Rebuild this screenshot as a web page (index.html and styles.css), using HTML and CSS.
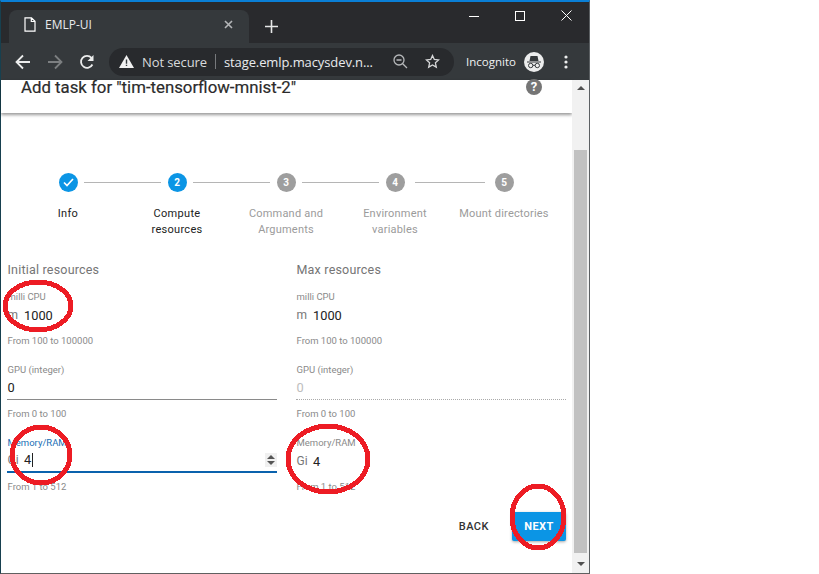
FILE: index.html
```html
<!DOCTYPE html>
<html lang="en">
<head>
<meta charset="utf-8">
<title>EMLP-UI</title>
<link rel="stylesheet" href="styles.css">
</head>
<body>
<div class="window">
  <div class="tabstrip">
    <div class="tab">
      <svg class="tab-file" width="12" height="15" viewBox="0 0 12 15"><path d="M1 .8h6.500L11 4.300v9.900H1zM7.300 1v3.500H11" fill="none" stroke="#fff" stroke-width="1.200"/></svg>
      <span class="tab-title">EMLP-UI</span>
      <svg class="tab-close" width="9" height="9" viewBox="0 0 9 9"><path d="M1 1l7 7M8 1L1 8" stroke="#b4b6b8" stroke-width="1.600"/></svg>
    </div>
    <svg class="newtab" width="13" height="13" viewBox="0 0 13 13"><path d="M6.500 0v13M0 6.500h13" stroke="#e6e7e8" stroke-width="1.600"/></svg>
    <div class="wincontrols">
      <svg width="10" height="10" viewBox="0 0 10 10"><path d="M0 5.500h10" stroke="#fff"/></svg>
      <svg width="10" height="10" viewBox="0 0 10 10"><rect x=".5" y=".5" width="9" height="9" fill="none" stroke="#fff"/></svg>
      <svg width="11" height="11" viewBox="0 0 11 11"><path d="M.5.500l10 10M10.500.500l-10 10" stroke="#fff"/></svg>
    </div>
  </div>
  <div class="toolbar">
    <svg class="navicon" width="16" height="16" viewBox="0 0 16 16"><path d="M15 8H2M8 1.500L1.500 8 8 14.500" fill="none" stroke="#eceded" stroke-width="1.800"/></svg>
    <svg class="navicon" width="16" height="16" viewBox="0 0 16 16"><path d="M1 8h13M8 1.500L14.500 8 8 14.500" fill="none" stroke="#7c7f81" stroke-width="1.800"/></svg>
    <svg class="navicon" width="16" height="16" viewBox="0 0 16 16"><path d="M13.400 10.500A6 6 0 1 1 12.500 3.800" fill="none" stroke="#eceded" stroke-width="1.800"/><path d="M14.500 1v6h-6z" fill="#eceded"/></svg>
    <div class="omnibox">
      <svg width="15" height="13" viewBox="0 0 15 13"><path d="M7.500 0L15 13H0z" fill="#f1f1f1"/><path d="M6.800 4.500h1.400v4.300H6.800zM6.800 9.800h1.400v1.300H6.800z" fill="#35393c"/></svg>
      <span class="secure">Not secure</span>
      <span class="divider"></span>
      <span class="url">stage.emlp.macysdev.n...</span>
      <svg class="zoomicon" width="15" height="15" viewBox="0 0 15 15"><circle cx="6" cy="6" r="5" fill="none" stroke="#b6b8ba" stroke-width="1.300"/><path d="M9.700 9.700L14 14M3.500 6h5" stroke="#b6b8ba" stroke-width="1.300"/></svg>
      <svg class="star" width="15" height="15" viewBox="0 0 15 15"><path d="M7.500 1.500l1.800 4 4.300.4-3.200 2.900.9 4.300-3.800-2.200-3.800 2.200.9-4.300-3.200-2.900 4.300-.4z" fill="none" stroke="#d6d7d8" stroke-width="1.300"/></svg>
    </div>
    <span class="incognito">Incognito</span>
    <svg class="spy" width="20" height="20" viewBox="0 0 20 20"><circle cx="10" cy="10" r="10" fill="#eceded"/><path d="M3 9.500h14v1H3zM5.500 9l1-5h7l1 5z" fill="#35393c"/><circle cx="6.700" cy="13.500" r="2.200" fill="#eceded" stroke="#35393c"/><circle cx="13.300" cy="13.500" r="2.200" fill="#eceded" stroke="#35393c"/><path d="M8.800 13.300h2.400" stroke="#35393c"/></svg>
    <svg class="kebab" width="4" height="14" viewBox="0 0 4 14"><circle cx="2" cy="2" r="1.600" fill="#eceded"/><circle cx="2" cy="7" r="1.600" fill="#eceded"/><circle cx="2" cy="12" r="1.600" fill="#eceded"/></svg>
  </div>
  <div class="viewport">
    <main class="page">
      <header class="dialog-head">
        <h1>Add task for "tim-tensorflow-mnist-2"</h1>
        <span class="help">?</span>
      </header>
      <div class="stepper">
        <div class="step-icons">
          <span class="dot"><svg width="11" height="9" viewBox="0 0 11 9"><path d="M1 4.500l3 3 6-6.500" fill="none" stroke="#fff" stroke-width="1.700"/></svg></span><span class="line"></span>
          <span class="dot">2</span><span class="line"></span>
          <span class="dot off">3</span><span class="line"></span>
          <span class="dot off">4</span><span class="line short"></span>
          <span class="dot off">5</span>
        </div>
        <div class="step-labels">
          <span class="on">Info</span>
          <span class="on">Compute resources</span>
          <span>Command and Arguments</span>
          <span>Environment variables</span>
          <span class="nowrap">Mount directories</span>
        </div>
      </div>
      <div class="form">
        <section class="col">
          <h2>Initial resources</h2>
          <div class="field">
            <label>milli CPU</label>
            <div class="control"><span class="unit">m</span><span class="value">1000</span></div>
            <p>From 100 to 100000</p>
          </div>
          <div class="field">
            <label>GPU (integer)</label>
            <div class="control lined"><span class="value">0</span></div>
            <p>From 0 to 100</p>
          </div>
          <div class="field">
            <label class="focus">Memory/RAM</label>
            <div class="control focused"><span class="unit">Gi</span><span class="value caret">4</span>
              <span class="spinner"><i class="up"></i><i class="down"></i></span>
            </div>
            <p>From 1 to 512</p>
          </div>
        </section>
        <section class="col">
          <h2>Max resources</h2>
          <div class="field">
            <label>milli CPU</label>
            <div class="control"><span class="unit">m</span><span class="value">1000</span></div>
            <p>From 100 to 100000</p>
          </div>
          <div class="field">
            <label>GPU (integer)</label>
            <div class="control dotted"><span class="value muted">0</span></div>
            <p>From 0 to 100</p>
          </div>
          <div class="field">
            <label>Memory/RAM</label>
            <div class="control"><span class="unit">Gi</span><span class="value">4</span></div>
            <p>From 1 to 512</p>
          </div>
        </section>
      </div>
      <div class="actions">
        <button class="back" type="button">BACK</button>
        <button class="next" type="button">NEXT</button>
      </div>
    </main>
    <div class="scrollbar">
      <span class="arrow-up"></span>
      <div class="track"><div class="thumb"></div></div>
      <span class="arrow-down"></span>
    </div>
  </div>
</div>
<svg class="annotations" width="819" height="574" viewBox="0 0 819 574" shape-rendering="crispEdges">
  <ellipse cx="38" cy="306" rx="33" ry="24"/>
  <ellipse cx="41" cy="455" rx="29" ry="28"/>
  <ellipse cx="328" cy="459" rx="40" ry="33"/>
  <ellipse cx="538" cy="517" rx="26" ry="31"/>
</svg>
</body>
</html>
```
FILE: styles.css
```css
* { box-sizing: border-box; }
html, body { margin: 0; height: 574px; background: #fff; overflow: hidden; }
body { font-family: Roboto, "Liberation Sans", sans-serif; position: relative; }
.window {
  width: 590px; height: 574px; display: flex; flex-direction: column;
  border-left: 1px solid #17404f; border-right: 1px solid #5c6063;
  border-top: 2px solid #0a7fd6; border-bottom: 1px solid #606060;
}
.tabstrip { height: 41px; background: #292a2d; display: flex; align-items: flex-end; position: relative; flex: none; }
.tab {
  width: 240px; height: 33px; margin-left: 8px; background: #35393c;
  border-radius: 8px 8px 0 0; display: flex; align-items: center; padding: 0 16px 5px 15px; flex: none;
}
.tab-title { color: #e8eaed; font: 12px "Open Sans", "Liberation Sans", sans-serif; margin-left: 9px; flex: 1; }
.newtab { margin: 0 0 10px 16px; }
.wincontrols { margin-left: auto; align-self: flex-start; display: flex; align-items: center; gap: 36px; padding: 8px 17px 0 0; }
.toolbar { height: 37px; background: #35393c; display: flex; align-items: center; flex: none; color: #e8eaed; }
.navicon { margin-left: 14px; flex: none; margin-right: 1px; }
.navicon + .navicon { margin-left: 15px; }
.omnibox {
  width: 345px; height: 28px; margin-left: 13px; background: #282a2d; border-radius: 14px;
  display: flex; align-items: center; padding: 0 10px 0 10px; flex: none;
}
.secure { font: 13px "Open Sans", "Liberation Sans", sans-serif; margin-left: 8px; color: #d8dadc; letter-spacing: -.1px; }
.divider { width: 1px; height: 15px; background: #77797c; margin: 0 8px 0 8px; }
.url { font: 13px "Open Sans", "Liberation Sans", sans-serif; color: #e8eaed; white-space: nowrap; width: 156px; letter-spacing: -.1px; }
.zoomicon { margin-left: 13px; flex: none; }
.star { margin-left: 17px; flex: none; }
.incognito { font: 11.500px "Open Sans", "Liberation Sans", sans-serif; margin-left: 12px; color: #f0f1f2; }
.spy { margin-left: 8px; flex: none; }
.kebab { margin-left: 20px; flex: none; }
.viewport { flex: 1; display: flex; min-height: 0; background: #fff; }
.page { width: 571px; flex: none; }
.dialog-head {
  height: 33px; box-shadow: 0 2px 3px rgba(0,0,0,.4); display: flex; align-items: flex-start;
  padding: 0 30px 0 20px; justify-content: space-between; background: #fff;
}
h1 { margin: -1px 0 0; font-size: 16.800px; font-weight: 400; color: #2a2a2a; line-height: 17px; -webkit-text-stroke: .2px #333; }
.help {
  width: 16px; height: 16px; border-radius: 50%; background: #757575; color: #fff;
  font-size: 13px; font-weight: 700; text-align: center; line-height: 16px; margin-top: -1px;
}
.stepper { padding-top: 59px; }
.step-icons { display: flex; align-items: center; padding-left: 57.500px; height: 20px; }
.dot {
  width: 19px; height: 19px; border-radius: 50%; background: #0b95e5; color: #fff; font-size: 10px; font-weight: 700;
  display: flex; align-items: center; justify-content: center; flex: none;
}
.dot.off { background: #9e9e9e; }
.line { width: 77px; height: 1px; background: #b5b5b5; margin: 0 7px 0 6px; flex: none; }
.line.short { width: 70px; margin: 0 10px; }
.step-labels { display: grid; grid-template-columns: repeat(5, 109px); padding-left: 12.500px; margin-top: 14px; }
.step-labels span { font-size: 11px; line-height: 16px; text-align: center; color: #9b9b9b; padding: 0 15px; letter-spacing: .2px; }
.step-labels .on { color: #222; padding: 0 25px; letter-spacing: .3px; }
.step-labels .nowrap { white-space: nowrap; padding: 0; }
.form { display: grid; grid-template-columns: 270px 270px; column-gap: 19px; padding: 0 0 0 6px; margin-top: 24px; }
h2 { margin: 0; font-size: 12.500px; line-height: 15px; font-weight: 400; color: #757575; letter-spacing: .2px; padding-left: .5px; }
.field { height: 73px; padding-top: 14px; }
.field label { display: block; font-size: 9.500px; line-height: 12px; color: #8a8a8a; padding-left: .5px; }
.field label.focus { color: #1a6fb5; }
.control { height: 24px; display: flex; align-items: center; font-size: 14px; position: relative; padding-left: .5px; }
.unit { font-size: 12px; color: #777; width: 16.500px; flex: none; }
.value { color: #222; font-size: 12.800px; }
.muted { color: #bdbdbd; }
.lined { border-bottom: 1px solid #8a8a8a; }
.dotted { border-bottom: 1px dotted #aaa; }
.focused { border-bottom: 2px solid #0a62ad; }
.caret { border-right: 1px solid #222; line-height: 14px; padding-right: 1px; }
.field p { margin: 0; padding: 8px 0 0 .5px; font-size: 9.500px; line-height: 12px; color: #8a8a8a; }
.spinner {
  position: absolute; right: 0; top: 4px; width: 12px; height: 14px; background: #f0f0f0;
  display: flex; flex-direction: column; align-items: center; justify-content: center; gap: 2px;
}
.spinner i { width: 0; height: 0; border-left: 4px solid transparent; border-right: 4px solid transparent; }
.spinner .up { border-bottom: 4px solid #555; }
.spinner .down { border-top: 4px solid #555; }
.actions { display: flex; justify-content: flex-end; align-items: center; gap: 23px; padding-right: 6px; margin-top: 16px; }
button { font: 500 11px Roboto, "Liberation Sans", sans-serif; letter-spacing: .5px; border: 0; background: none; padding: 0; }
.back { color: #333; }
.next { width: 54px; height: 29px; background: #0b95e5; color: #fff; border-radius: 2px; font-weight: 700; box-shadow: 0 1px 3px rgba(0,0,0,.35); }
.scrollbar { flex: 1; background: #f1f1f1; display: flex; flex-direction: column; align-items: center; }
.arrow-up, .arrow-down { width: 0; height: 0; border-left: 4px solid transparent; border-right: 4px solid transparent; flex: none; }
.arrow-up { border-bottom: 4px solid #505050; margin: 6px 0; }
.arrow-down { border-top: 4px solid #505050; margin: 9px 0 7px; }
.track { flex: 1; width: 100%; padding: 54px 2px 0; display: flex; }
.thumb { flex: 1; background: #c1c1c1; }
.annotations { position: absolute; left: 0; top: 0; pointer-events: none; }
.annotations ellipse { fill: none; stroke: #ed1c24; stroke-width: 5; }
```
